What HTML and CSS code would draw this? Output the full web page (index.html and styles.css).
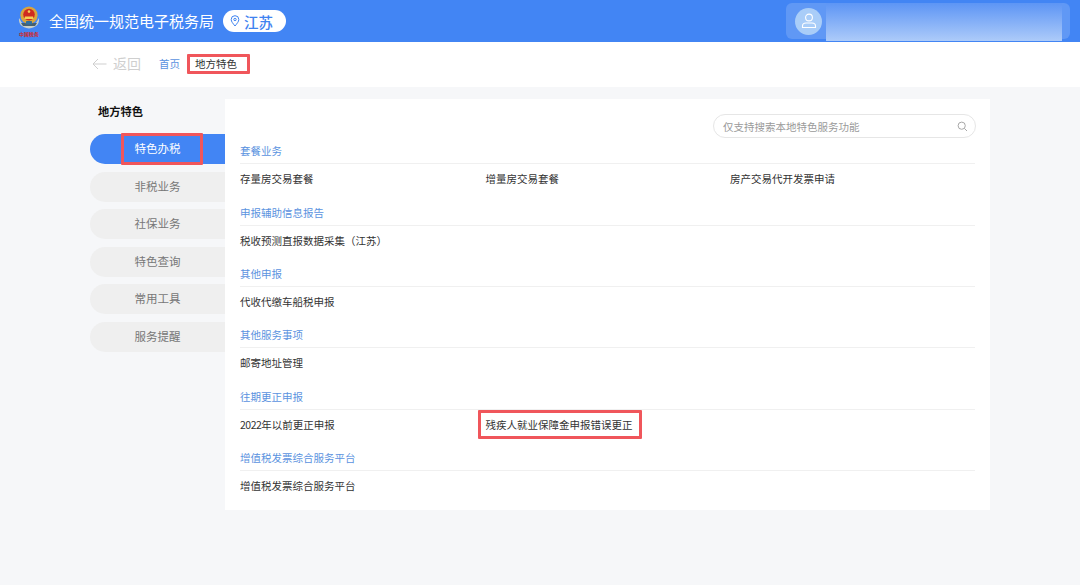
FILE: index.html
```html
<!DOCTYPE html>
<html lang="zh">
<head>
<meta charset="utf-8">
<title>地方特色</title>
<link rel="stylesheet" href="styles.css">
</head>
<body>
<header class="top">
  <div class="logo">
    <svg class="emblem" width="22" height="23" viewBox="0 0 22 23">
      <path d="M1 12 Q0 21 11 22.5 Q22 21 21 12 L18 17 H4 Z" fill="#c9cfc8"/>
      <path d="M3 17 H19 L17 20 H5 Z" fill="#46606f"/>
      <circle cx="11" cy="9.2" r="8.6" fill="#d9a53c"/>
      <circle cx="11" cy="8.6" r="5.8" fill="#cf2a20"/>
      <circle cx="11" cy="5.6" r="1.3" fill="#f4cf55"/>
      <path d="M7 10.5 H15 L15.6 13 H6.4 Z" fill="#f4cf55"/>
      <rect x="8" y="15" width="6" height="3.4" rx=".6" fill="#2f6f9f"/>
    </svg>
    <span class="seal">中国税务</span>
  </div>
  <h1 class="site">全国统一规范电子税务局</h1>
  <div class="region">
    <svg width="10" height="12" viewBox="0 0 10 12"><path d="M5 11 C3 8.5 1.2 6.6 1.2 4.5 A3.8 3.8 0 0 1 8.8 4.5 C8.8 6.6 7 8.5 5 11 Z" fill="none" stroke="#3f83f0" stroke-width="1"/><circle cx="5" cy="4.5" r="1.2" fill="none" stroke="#3f83f0"/></svg>
    <span>江苏</span>
  </div>
  <div class="user">
    <div class="avatar">
      <svg width="18" height="18" viewBox="0 0 18 18"><circle cx="9" cy="5.5" r="3.4" fill="none" stroke="#fff" stroke-width="1.1"/><path d="M2.5 15.5 V14 Q2.5 11 6 11 H12 Q15.5 11 15.5 14 V15.5 Z" fill="none" stroke="#fff" stroke-width="1.1"/></svg>
    </div>
    <div class="blur"></div>
  </div>
</header>
<nav class="crumbs">
  <span class="back">
    <svg width="15" height="12" viewBox="0 0 15 12"><path d="M14.5 6 H1 M6 1 L1 6 L6 11" fill="none" stroke="#cfcfcf" stroke-width="1"/></svg>
    <span class="back-text">返回</span>
  </span>
  <span class="home">首页</span>
  <span class="current">地方特色</span>
</nav>
<main class="main">
  <aside class="side">
    <div class="side-title">地方特色</div>
    <ul class="menu">
      <li class="pill active">特色办税<span class="mark"></span></li>
      <li class="pill">非税业务</li>
      <li class="pill">社保业务</li>
      <li class="pill">特色查询</li>
      <li class="pill">常用工具</li>
      <li class="pill">服务提醒</li>
    </ul>
  </aside>
  <section class="panel">
    <div class="search">
      <span>仅支持搜索本地特色服务功能</span>
      <svg width="11" height="11" viewBox="0 0 11 11"><circle cx="4.7" cy="4.7" r="3.6" fill="none" stroke="#a8a8a8"/><path d="M7.4 7.4 L10 10" stroke="#a8a8a8"/></svg>
    </div>
    <div class="group">
      <h2>套餐业务</h2>
      <div class="row"><span>存量房交易套餐</span><span>增量房交易套餐</span><span>房产交易代开发票申请</span></div>
    </div>
    <div class="group">
      <h2>申报辅助信息报告</h2>
      <div class="row"><span>税收预测直报数据采集（江苏）</span></div>
    </div>
    <div class="group">
      <h2>其他申报</h2>
      <div class="row"><span>代收代缴车船税申报</span></div>
    </div>
    <div class="group">
      <h2>其他服务事项</h2>
      <div class="row"><span>邮寄地址管理</span></div>
    </div>
    <div class="group">
      <h2>往期更正申报</h2>
      <div class="row"><span><span class="num">2022</span>年以前更正申报</span><span class="hit">残疾人就业保障金申报错误更正<i class="hit-box"></i></span></div>
    </div>
    <div class="group">
      <h2>增值税发票综合服务平台</h2>
      <div class="row"><span>增值税发票综合服务平台</span></div>
    </div>
  </section>
</main>
</body>
</html>
```
FILE: styles.css
```css
* { box-sizing: border-box; }
html, body { margin: 0; height: 100%; }
body {
  font-family: "Noto Sans CJK SC", "Liberation Sans", sans-serif;
  background: #f6f7f9;
  color: #333;
  overflow: hidden;
}
.top {
  height: 42px;
  background: #4285f4;
  display: flex;
  align-items: center;
  padding-left: 18px;
  position: relative;
}
.logo {
  width: 22px;
  height: 42px;
  display: flex;
  flex-direction: column;
  align-items: center;
  margin-right: 9px;
  padding-top: 6px;
}
.emblem { flex: none; }
.seal {
  font-size: 5px;
  line-height: 7px;
  margin-top: 1px;
  color: #d3271f;
  white-space: nowrap;
  font-weight: 700;
}
.site {
  margin: 0;
  font-size: 15px;
  font-weight: 400;
  color: #fff;
  letter-spacing: 0;
  line-height: 42px;
  white-space: nowrap;
}
.region {
  margin-left: 9px;
  width: 63px;
  height: 22px;
  border-radius: 11px;
  background: #fff;
  display: flex;
  align-items: center;
  padding-left: 7px;
  gap: 4px;
  color: #3f83f0;
  font-size: 14.5px;
  font-weight: 500;
}
.user {
  margin-left: auto;
  margin-right: 10px;
  width: 284px;
  height: 36px;
  border-radius: 6px;
  background: rgba(255, 255, 255, .16);
  display: flex;
  align-items: center;
  padding-left: 9px;
  position: relative;
}
.avatar {
  width: 27px;
  height: 27px;
  border-radius: 50%;
  background: #a9cdf8;
  display: flex;
  align-items: center;
  justify-content: center;
}
.blur {
  position: absolute;
  left: 40px;
  right: 8px;
  top: 0;
  height: 38px;
  background: linear-gradient(#5d95f5, #adcbf9);
}
.crumbs {
  height: 45px;
  background: #fff;
  display: flex;
  align-items: center;
  padding-left: 92px;
  font-size: 10.5px;
}
.back {
  display: flex;
  align-items: center;
  gap: 6px;
  color: #cfcfcf;
  font-size: 14px;
  width: 67px;
  margin-top: -2px;
}
.back-text { line-height: 16px; margin-top: -1px; }
.home { color: #5b93e0; margin-right: 4px; line-height: 16px; margin-top: -1px; }
.current {
  color: #333;
  border: 3px solid #f0565b;
  border-radius: 1px;
  height: 20px;
  width: 63px;
  line-height: 14px;
  padding-left: 5px;
  margin-left: 3px;
  margin-top: -2px;
  white-space: nowrap;
}
.main {
  display: flex;
  padding: 12px 0 0 90px;
  align-items: flex-start;
}
.side { width: 135px; }
.side-title {
  font-size: 11.25px;
  font-weight: 700;
  color: #111;
  padding-left: 8px;
  line-height: 26px;
  margin-top: -1px;
}
.menu {
  list-style: none;
  margin: 10px 0 0;
  padding: 0;
  display: flex;
  flex-direction: column;
  gap: 7.6px;
}
.pill {
  height: 30px;
  line-height: 29px;
  border-radius: 15px 0 0 15px;
  background: #efefef;
  color: #777;
  font-size: 11.5px;
  text-align: center;
  position: relative;
}
.pill.active { background: #4285f4; color: #fff; }
.mark {
  position: absolute;
  left: 31px;
  top: -1px;
  width: 82px;
  height: 32px;
  border: 3px solid #f0565b;
  border-radius: 1px;
}
.panel {
  width: 765px;
  height: 411px;
  background: #fff;
  padding: 15px 15px 0;
}
.search {
  width: 263px;
  height: 24px;
  margin: 0 0 .2px 473px;
  border: 1px solid #e6e6e6;
  border-radius: 12px;
  display: flex;
  align-items: center;
  justify-content: space-between;
  padding: 0 7px 0 9px;
  font-size: 10.5px;
  color: #9a9a9a;
  background: #fff;
}
.group { height: 61.4px; }
.group h2 {
  margin: 0;
  font-size: 10.5px;
  font-weight: 400;
  color: #5b93e0;
  line-height: 26px;
  height: 26px;
  border-bottom: 1px solid #f0f0f0;
}
.row {
  display: grid;
  grid-template-columns: 245.5px 244.5px 1fr;
  font-size: 10.5px;
  color: #333;
  line-height: 30px;
}
.num { letter-spacing: -.5px; }
.hit { position: relative; }
.hit-box {
  position: absolute;
  left: -8px;
  top: 0;
  width: 164px;
  height: 29px;
  border: 3px solid #f0565b;
  border-radius: 1px;
}
```
